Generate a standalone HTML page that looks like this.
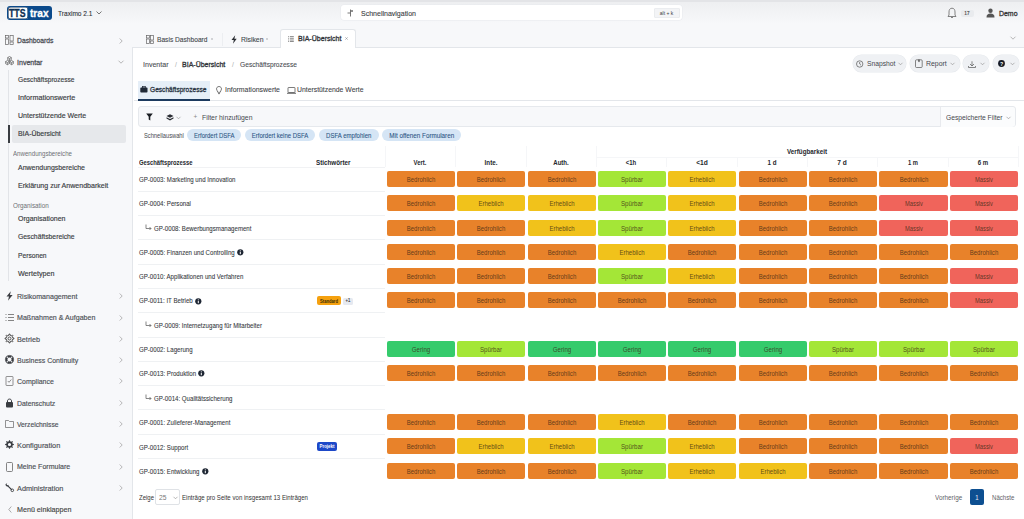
<!DOCTYPE html>
<html><head><meta charset="utf-8"><title>BIA-Übersicht</title>
<style>
html,body{margin:0;padding:0;width:1024px;height:519px;overflow:hidden;font-family:"Liberation Sans", sans-serif;}
.t{position:absolute;white-space:nowrap;line-height:12px;}
.info{display:inline-block;width:7.6px;height:6.5px;border-radius:50%;background:#1f2937;margin-left:4px;vertical-align:-0.5px;position:relative}
.info::after{content:"";position:absolute;left:3.3px;top:2.6px;width:1.1px;height:2.6px;background:#fff;box-shadow:0 -1.5px 0 -0.1px #fff}
svg{overflow:visible}
</style></head><body>
<div style="position:absolute;left:0;top:0;width:1024px;height:519px;background:#f7f8fa"></div>
<div style="position:absolute;left:0px;top:0px;width:1024px;height:24px;background:linear-gradient(#edeef0,#f7f8fa)"></div>
<div style="position:absolute;left:0px;top:0px;width:1024px;height:1.5px;background:#e3e4e7"></div>
<div style="position:absolute;left:7px;top:6px;width:45px;height:14px;border-radius:3px;background:#0b4a8b"></div>
<div style="position:absolute;left:8px;top:7px;width:20px;height:12px;border-radius:2.5px;background:#fff;box-shadow:inset 0 0 0 0.6px #163a60"></div>
<div class="t" style="left:9.4px;top:6.8px;font-size:10.4px;line-height:14px;font-weight:700;color:#0e2f52;-webkit-text-stroke:0.3px #0e2f52;transform:scaleX(0.84);transform-origin:0 50%">TTS</div>
<div class="t" style="left:29.8px;top:5.6px;font-size:11px;line-height:14px;font-weight:700;color:#fff;-webkit-text-stroke:0.3px #fff;transform:scaleX(0.92);transform-origin:0 50%">trax</div>
<div class="t" style="left:58px;top:8px;font-size:8px;color:#2d3035;font-weight:400;-webkit-text-stroke:0.1px #2d3035;transform:scaleX(0.8227);transform-origin:0 50%;">Traximo 2.1</div>
<svg style="position:absolute;left:96px;top:11px" width="6" height="4" viewBox="0 0 6 4"><path d="M0.5 0.5 L3 3 L5.5 0.5" fill="none" stroke="#555" stroke-width="0.8"/></svg>
<div style="position:absolute;left:341px;top:4.8px;width:341px;height:15.3px;background:#fff;border-radius:3px;box-shadow:0 0 0 0.5px #e8eaee"></div>
<svg style="position:absolute;left:347px;top:9px" width="7" height="8" viewBox="0 0 7 8"><path d="M3.5 0.5 V7.5 M0.5 4 H3.5 M3.5 2 H6 M5 1 V3" fill="none" stroke="#555" stroke-width="0.8"/></svg>
<div class="t" style="left:360.5px;top:7.6px;font-size:7.3px;color:#3a3d42;font-weight:400;-webkit-text-stroke:0.1px #3a3d42;transform:scaleX(0.9612);transform-origin:0 50%;">Schnellnavigation</div>
<div style="position:absolute;left:654px;top:8.3px;width:25.5px;height:9.5px;background:#f3f4f6;border-radius:2px;box-shadow:inset 0 0 0 0.6px #e4e6e9"></div>
<div class="t" style="left:654.3px;width:25px;text-align:center;top:7.199999999999999px;font-size:5.2px;color:#3a3d42;font-weight:400;transform:scaleX(0.9500);transform-origin:50% 50%;font-family:"Liberation Mono", monospace;">alt + k</div>
<svg style="position:absolute;left:947px;top:7px" width="10" height="12" viewBox="0 0 10 12"><path d="M5 1.2 C2.8 1.2 2 3 2 5 V8 L1 9.5 H9 L8 8 V5 C8 3 7.2 1.2 5 1.2 Z M4 10.5 H6" fill="none" stroke="#666" stroke-width="0.8"/></svg>
<div style="position:absolute;left:961px;top:9.5px;width:12.5px;height:7.5px;background:#e9ebee;border-radius:2px"></div>
<div class="t" style="left:960.2px;width:14px;text-align:center;top:7.300000000000001px;font-size:5.5px;color:#555;font-weight:700;transform:scaleX(0.8700);transform-origin:50% 50%;">17</div>
<svg style="position:absolute;left:986px;top:8px" width="9" height="10" viewBox="0 0 9 10"><circle cx="4.5" cy="2.8" r="2.2" fill="#555"/><path d="M0.5 9.5 C0.5 6.5 2 5.5 4.5 5.5 C7 5.5 8.5 6.5 8.5 9.5 Z" fill="#555"/></svg>
<div class="t" style="left:998.8px;top:8px;font-size:7.5px;color:#333;font-weight:400;-webkit-text-stroke:0.3px #333;transform:scaleX(0.9248);transform-origin:0 50%;">Demo</div>
<svg style="position:absolute;left:5px;top:35px" width="9" height="10" viewBox="0 0 9 10"><rect x="0.5" y="0.5" width="3" height="2.5" fill="none" stroke="#666" stroke-width="0.7"/><rect x="0.5" y="4" width="3" height="5.5" fill="none" stroke="#666" stroke-width="0.7"/><rect x="5" y="0.5" width="3.2" height="5.5" fill="none" stroke="#666" stroke-width="0.7"/><rect x="5" y="7" width="3.2" height="2.5" fill="none" stroke="#666" stroke-width="0.7"/></svg>
<div class="t" style="left:17.3px;top:35.099999999999994px;font-size:7.4px;color:#50535a;font-weight:400;-webkit-text-stroke:0.3px #50535a;transform:scaleX(0.9148);transform-origin:0 50%;">Dashboards</div>
<svg style="position:absolute;left:119px;top:37.5px" width="4" height="6" viewBox="0 0 4 6"><path d="M0.7 0.5 L3.2 3 L0.7 5.5" fill="none" stroke="#999" stroke-width="0.7"/></svg>
<svg style="position:absolute;left:4.8px;top:55.8px" width="9" height="10" viewBox="0 0 9 10"><path d="M4.50 0.50 L6.32 1.55 L6.32 3.65 L4.50 4.70 L2.68 3.65 L2.68 1.55 Z M2.68 1.55 L4.50 2.60 L6.32 1.55 M4.50 2.60 L4.50 4.70" fill="none" stroke="#555" stroke-width="0.65"/><path d="M2.40 4.50 L4.22 5.55 L4.22 7.65 L2.40 8.70 L0.58 7.65 L0.58 5.55 Z M0.58 5.55 L2.40 6.60 L4.22 5.55 M2.40 6.60 L2.40 8.70" fill="none" stroke="#555" stroke-width="0.65"/><path d="M6.60 4.50 L8.42 5.55 L8.42 7.65 L6.60 8.70 L4.78 7.65 L4.78 5.55 Z M4.78 5.55 L6.60 6.60 L8.42 5.55 M6.60 6.60 L6.60 8.70" fill="none" stroke="#555" stroke-width="0.65"/></svg>
<div class="t" style="left:17.3px;top:56.5px;font-size:7.4px;color:#50535a;font-weight:400;-webkit-text-stroke:0.3px #50535a;transform:scaleX(0.9538);transform-origin:0 50%;">Inventar</div>
<svg style="position:absolute;left:118px;top:60px" width="6" height="4" viewBox="0 0 6 4"><path d="M0.5 0.7 L3 3.2 L5.5 0.7" fill="none" stroke="#999" stroke-width="0.7"/></svg>
<div style="position:absolute;left:8px;top:70px;width:1px;height:211px;background:#e2e4e8"></div>
<div style="position:absolute;left:12px;top:125.1px;width:114px;height:18.3px;background:#e6e8eb;border-radius:2px"></div>
<div style="position:absolute;left:8px;top:125.1px;width:1.6px;height:18.3px;background:#3a3d42"></div>
<div class="t" style="left:17.8px;top:74.1px;font-size:7.4px;color:#3a3d42;font-weight:400;-webkit-text-stroke:0.16px #3a3d42;transform:scaleX(0.8936);transform-origin:0 50%;">Geschäftsprozesse</div>
<div class="t" style="left:17.8px;top:92.0px;font-size:7.4px;color:#3a3d42;font-weight:400;-webkit-text-stroke:0.16px #3a3d42;transform:scaleX(0.9743);transform-origin:0 50%;">Informationswerte</div>
<div class="t" style="left:17.8px;top:110.0px;font-size:7.4px;color:#3a3d42;font-weight:400;-webkit-text-stroke:0.16px #3a3d42;transform:scaleX(0.9494);transform-origin:0 50%;">Unterstützende Werte</div>
<div class="t" style="left:17.8px;top:128.10000000000002px;font-size:7.4px;color:#3a3d42;font-weight:400;-webkit-text-stroke:0.16px #3a3d42;transform:scaleX(0.9377);transform-origin:0 50%;">BIA-Übersicht</div>
<div class="t" style="left:13px;top:148.3px;font-size:6.8px;color:#6e7176;font-weight:400;transform:scaleX(0.9022);transform-origin:0 50%;">Anwendungsbereiche</div>
<div class="t" style="left:13px;top:199.60000000000002px;font-size:6.8px;color:#6e7176;font-weight:400;transform:scaleX(0.9260);transform-origin:0 50%;">Organisation</div>
<div class="t" style="left:17.5px;top:162.0px;font-size:7.4px;color:#3a3d42;font-weight:400;-webkit-text-stroke:0.16px #3a3d42;transform:scaleX(0.9414);transform-origin:0 50%;">Anwendungsbereiche</div>
<div class="t" style="left:17.5px;top:180.10000000000002px;font-size:7.4px;color:#3a3d42;font-weight:400;-webkit-text-stroke:0.16px #3a3d42;transform:scaleX(0.9556);transform-origin:0 50%;">Erklärung zur Anwendbarkeit</div>
<div class="t" style="left:17.5px;top:213.3px;font-size:7.4px;color:#3a3d42;font-weight:400;-webkit-text-stroke:0.16px #3a3d42;transform:scaleX(0.9465);transform-origin:0 50%;">Organisationen</div>
<div class="t" style="left:17.5px;top:231.3px;font-size:7.4px;color:#3a3d42;font-weight:400;-webkit-text-stroke:0.16px #3a3d42;transform:scaleX(0.9190);transform-origin:0 50%;">Geschäftsbereiche</div>
<div class="t" style="left:17.5px;top:249.8px;font-size:7.4px;color:#3a3d42;font-weight:400;-webkit-text-stroke:0.16px #3a3d42;transform:scaleX(0.9029);transform-origin:0 50%;">Personen</div>
<div class="t" style="left:17.5px;top:268.3px;font-size:7.4px;color:#3a3d42;font-weight:400;-webkit-text-stroke:0.16px #3a3d42;transform:scaleX(0.9681);transform-origin:0 50%;">Wertetypen</div>
<svg style="position:absolute;left:4.5px;top:291.4px" width="9" height="10" viewBox="0 0 9 10"><path d="M5.8 0.3 L1.5 5.6 H4 L3 9.7 L7.6 4 H5 Z" fill="#3a3d42"/></svg>
<div class="t" style="left:17.3px;top:291.2px;font-size:7.4px;color:#4d5056;font-weight:400;-webkit-text-stroke:0.16px #4d5056;transform:scaleX(0.9552);transform-origin:0 50%;">Risikomanagement</div>
<svg style="position:absolute;left:119.3px;top:293.4px" width="4" height="6" viewBox="0 0 4 6"><path d="M0.7 0.5 L3.2 3 L0.7 5.5" fill="none" stroke="#999" stroke-width="0.7"/></svg>
<svg style="position:absolute;left:4.5px;top:312.5px" width="9" height="10" viewBox="0 0 9 10"><path d="M0.5 1.5 H1.5 M0.5 4.5 H1.5 M0.5 7.5 H1.5 M3 1.5 H9 M3 4.5 H9 M3 7.5 H9" stroke="#666" stroke-width="0.8"/></svg>
<div class="t" style="left:17.3px;top:312.3px;font-size:7.4px;color:#4d5056;font-weight:400;-webkit-text-stroke:0.16px #4d5056;transform:scaleX(0.9590);transform-origin:0 50%;">Maßnahmen &amp; Aufgaben</div>
<svg style="position:absolute;left:119.3px;top:314.5px" width="4" height="6" viewBox="0 0 4 6"><path d="M0.7 0.5 L3.2 3 L0.7 5.5" fill="none" stroke="#999" stroke-width="0.7"/></svg>
<svg style="position:absolute;left:4.5px;top:334px" width="9" height="10" viewBox="0 0 9 10"><path d="M7.74 3.86 L8.87 3.98 L8.87 5.02 L7.74 5.14 L7.24 6.33 L7.96 7.22 L7.22 7.96 L6.33 7.24 L5.14 7.74 L5.02 8.87 L3.98 8.87 L3.86 7.74 L2.67 7.24 L1.78 7.96 L1.04 7.22 L1.76 6.33 L1.26 5.14 L0.13 5.02 L0.13 3.98 L1.26 3.86 L1.76 2.67 L1.04 1.78 L1.78 1.04 L2.67 1.76 L3.86 1.26 L3.98 0.13 L5.02 0.13 L5.14 1.26 L6.33 1.76 L7.22 1.04 L7.96 1.78 L7.24 2.67 Z" fill="none" stroke="#444" stroke-width="0.95" stroke-linejoin="round"/><circle cx="4.5" cy="4.5" r="1.5" fill="none" stroke="#444" stroke-width="0.9"/></svg>
<div class="t" style="left:17.3px;top:333.8px;font-size:7.4px;color:#4d5056;font-weight:400;-webkit-text-stroke:0.16px #4d5056;transform:scaleX(0.9810);transform-origin:0 50%;">Betrieb</div>
<svg style="position:absolute;left:119.3px;top:336px" width="4" height="6" viewBox="0 0 4 6"><path d="M0.7 0.5 L3.2 3 L0.7 5.5" fill="none" stroke="#999" stroke-width="0.7"/></svg>
<svg style="position:absolute;left:4.5px;top:355.3px" width="9" height="10" viewBox="0 0 9 10"><circle cx="4.5" cy="4.5" r="3.2" fill="none" stroke="#3a3d42" stroke-width="1.8"/><path d="M1.7 1.7 L3.4 3.4 M7.3 1.7 L5.6 3.4 M1.7 7.3 L3.4 5.6 M7.3 7.3 L5.6 5.6" stroke="#f7f8fa" stroke-width="1.2"/><circle cx="4.5" cy="4.5" r="4.1" fill="none" stroke="#3a3d42" stroke-width="0.6"/><circle cx="4.5" cy="4.5" r="2.3" fill="none" stroke="#3a3d42" stroke-width="0.5"/></svg>
<div class="t" style="left:17.3px;top:355.1px;font-size:7.4px;color:#4d5056;font-weight:400;-webkit-text-stroke:0.16px #4d5056;transform:scaleX(0.9417);transform-origin:0 50%;">Business Continuity</div>
<svg style="position:absolute;left:119.3px;top:357.3px" width="4" height="6" viewBox="0 0 4 6"><path d="M0.7 0.5 L3.2 3 L0.7 5.5" fill="none" stroke="#999" stroke-width="0.7"/></svg>
<svg style="position:absolute;left:4.5px;top:376.4px" width="9" height="10" viewBox="0 0 9 10"><rect x="1" y="0.5" width="7" height="9" rx="0.5" fill="none" stroke="#666" stroke-width="0.7"/><path d="M2.8 5 L4 6.3 L6.3 3.5" fill="none" stroke="#666" stroke-width="0.7"/></svg>
<div class="t" style="left:17.3px;top:376.2px;font-size:7.4px;color:#4d5056;font-weight:400;-webkit-text-stroke:0.16px #4d5056;transform:scaleX(0.9444);transform-origin:0 50%;">Compliance</div>
<svg style="position:absolute;left:119.3px;top:378.4px" width="4" height="6" viewBox="0 0 4 6"><path d="M0.7 0.5 L3.2 3 L0.7 5.5" fill="none" stroke="#999" stroke-width="0.7"/></svg>
<svg style="position:absolute;left:4.5px;top:398px" width="9" height="10" viewBox="0 0 9 10"><rect x="1" y="4" width="7" height="5.5" rx="1" fill="#3a3d42"/><path d="M2.5 4 V2.8 C2.5 0.5 6.5 0.5 6.5 2.8 V4" fill="none" stroke="#3a3d42" stroke-width="1"/></svg>
<div class="t" style="left:17.3px;top:397.8px;font-size:7.4px;color:#4d5056;font-weight:400;-webkit-text-stroke:0.16px #4d5056;transform:scaleX(0.9312);transform-origin:0 50%;">Datenschutz</div>
<svg style="position:absolute;left:119.3px;top:400px" width="4" height="6" viewBox="0 0 4 6"><path d="M0.7 0.5 L3.2 3 L0.7 5.5" fill="none" stroke="#999" stroke-width="0.7"/></svg>
<svg style="position:absolute;left:4.5px;top:419px" width="9" height="10" viewBox="0 0 9 10"><path d="M0.5 1.5 H3.5 L4.5 2.5 H8.5 V8.5 H0.5 Z" fill="none" stroke="#666" stroke-width="0.7"/></svg>
<div class="t" style="left:17.3px;top:418.8px;font-size:7.4px;color:#4d5056;font-weight:400;-webkit-text-stroke:0.16px #4d5056;transform:scaleX(0.9112);transform-origin:0 50%;">Verzeichnisse</div>
<svg style="position:absolute;left:119.3px;top:421px" width="4" height="6" viewBox="0 0 4 6"><path d="M0.7 0.5 L3.2 3 L0.7 5.5" fill="none" stroke="#999" stroke-width="0.7"/></svg>
<svg style="position:absolute;left:4.5px;top:440.2px" width="9" height="10" viewBox="0 0 9 10"><path d="M7.74 3.86 L8.87 3.98 L8.87 5.02 L7.74 5.14 L7.24 6.33 L7.96 7.22 L7.22 7.96 L6.33 7.24 L5.14 7.74 L5.02 8.87 L3.98 8.87 L3.86 7.74 L2.67 7.24 L1.78 7.96 L1.04 7.22 L1.76 6.33 L1.26 5.14 L0.13 5.02 L0.13 3.98 L1.26 3.86 L1.76 2.67 L1.04 1.78 L1.78 1.04 L2.67 1.76 L3.86 1.26 L3.98 0.13 L5.02 0.13 L5.14 1.26 L6.33 1.76 L7.22 1.04 L7.96 1.78 L7.24 2.67 Z M6.1 4.5 A1.6 1.6 0 1 0 2.9 4.5 A1.6 1.6 0 1 0 6.1 4.5 Z" fill="#3a3d42" fill-rule="evenodd"/></svg>
<div class="t" style="left:17.3px;top:440.0px;font-size:7.4px;color:#4d5056;font-weight:400;-webkit-text-stroke:0.16px #4d5056;transform:scaleX(0.9930);transform-origin:0 50%;">Konfiguration</div>
<svg style="position:absolute;left:119.3px;top:442.2px" width="4" height="6" viewBox="0 0 4 6"><path d="M0.7 0.5 L3.2 3 L0.7 5.5" fill="none" stroke="#999" stroke-width="0.7"/></svg>
<svg style="position:absolute;left:4.5px;top:461.6px" width="9" height="10" viewBox="0 0 9 10"><rect x="1.5" y="0.5" width="6" height="9" rx="1" fill="none" stroke="#666" stroke-width="0.8"/></svg>
<div class="t" style="left:17.3px;top:461.40000000000003px;font-size:7.4px;color:#4d5056;font-weight:400;-webkit-text-stroke:0.16px #4d5056;transform:scaleX(0.9513);transform-origin:0 50%;">Meine Formulare</div>
<svg style="position:absolute;left:119.3px;top:463.6px" width="4" height="6" viewBox="0 0 4 6"><path d="M0.7 0.5 L3.2 3 L0.7 5.5" fill="none" stroke="#999" stroke-width="0.7"/></svg>
<svg style="position:absolute;left:4.5px;top:482.8px" width="9" height="10" viewBox="0 0 9 10"><path d="M2.3 2.3 L6.8 6.8" stroke="#3a3d42" stroke-width="1.2" fill="none"/><path d="M0.6 2.2 C0.2 1.2 1.2 0.2 2.2 0.6 L1.6 1.6 L2.4 2.4 L3.4 1.8 C3.8 2.8 2.8 3.8 1.8 3.4 Z" fill="#3a3d42"/><circle cx="7.3" cy="7.3" r="1.3" fill="none" stroke="#3a3d42" stroke-width="0.9"/></svg>
<div class="t" style="left:17.3px;top:482.6px;font-size:7.4px;color:#4d5056;font-weight:400;-webkit-text-stroke:0.16px #4d5056;transform:scaleX(0.9918);transform-origin:0 50%;">Administration</div>
<svg style="position:absolute;left:119.3px;top:484.8px" width="4" height="6" viewBox="0 0 4 6"><path d="M0.7 0.5 L3.2 3 L0.7 5.5" fill="none" stroke="#999" stroke-width="0.7"/></svg>
<svg style="position:absolute;left:8px;top:505.5px" width="4" height="7" viewBox="0 0 4 7"><path d="M3.3 0.5 L0.8 3.5 L3.3 6.5" fill="none" stroke="#888" stroke-width="0.7"/></svg>
<div class="t" style="left:17.4px;top:503.8px;font-size:7.4px;color:#444;font-weight:400;-webkit-text-stroke:0.15px #444;transform:scaleX(0.9670);transform-origin:0 50%;">Menü einklappen</div>
<svg style="position:absolute;left:146px;top:34.5px" width="8" height="9" viewBox="0 0 8 9"><rect x="0.5" y="0.5" width="3" height="2.5" fill="none" stroke="#666" stroke-width="0.7"/><rect x="0.5" y="4" width="3" height="4.5" fill="none" stroke="#666" stroke-width="0.7"/><rect x="4.5" y="0.5" width="3" height="4.5" fill="none" stroke="#666" stroke-width="0.7"/><rect x="4.5" y="6" width="3" height="2.5" fill="none" stroke="#666" stroke-width="0.7"/></svg>
<div class="t" style="left:156.6px;top:33.6px;font-size:7.8px;color:#45484e;font-weight:400;-webkit-text-stroke:0.12px #45484e;transform:scaleX(0.8502);transform-origin:0 50%;">Basis Dashboard</div>
<svg style="position:absolute;left:210.8px;top:38px" width="2" height="2" viewBox="0 0 2 2"><path d="M0.2 0.2 L1.8 1.8 M1.8 0.2 L0.2 1.8" stroke="#a8aaae" stroke-width="0.6"/></svg>
<div style="position:absolute;left:222px;top:33px;width:0.7px;height:13px;background:#eceef1"></div>
<svg style="position:absolute;left:230.8px;top:35.2px" width="6" height="9" viewBox="0 0 6 9"><path d="M4.2 0.3 L0.5 5 H2.8 L2 8.7 L5.7 3.8 H3.4 Z" fill="#2a2d32"/></svg>
<div class="t" style="left:240.8px;top:33.6px;font-size:7.8px;color:#45484e;font-weight:400;-webkit-text-stroke:0.12px #45484e;transform:scaleX(0.8798);transform-origin:0 50%;">Risiken</div>
<svg style="position:absolute;left:266.2px;top:38px" width="2" height="2" viewBox="0 0 2 2"><path d="M0.2 0.2 L1.8 1.8 M1.8 0.2 L0.2 1.8" stroke="#a8aaae" stroke-width="0.6"/></svg>
<div style="position:absolute;left:131.7px;top:47px;width:892.3px;height:473px;background:#fff;border-top:1px solid #e3e6ea;border-left:1px solid #e3e6ea;box-sizing:border-box"></div>
<div style="position:absolute;left:279.5px;top:28.8px;width:76.5px;height:19.4px;background:#fff;border:1px solid #e3e6ea;border-bottom:none;border-radius:3px 3px 0 0;box-sizing:border-box"></div>
<svg style="position:absolute;left:288px;top:35.5px" width="6" height="6" viewBox="0 0 6 6"><path d="M0.2 0.6 H1.2 M0.2 2.3 H1.2 M0.2 4 H1.2 M0.2 5.5 H1.2 M2 0.6 H5.8 M2 2.3 H5.8 M2 4 H5.8 M2 5.5 H5.8" stroke="#666" stroke-width="0.75"/></svg>
<div class="t" style="left:297.6px;top:33.4px;font-size:7.8px;color:#2e3136;font-weight:400;-webkit-text-stroke:0.3px #2e3136;transform:scaleX(0.9041);transform-origin:0 50%;">BIA-Übersicht</div>
<svg style="position:absolute;left:345.2px;top:37.2px" width="3" height="3" viewBox="0 0 3 3"><path d="M0.3 0.3 L2.7 2.7 M2.7 0.3 L0.3 2.7" stroke="#8a8d92" stroke-width="0.6"/></svg>
<svg style="position:absolute;left:1010px;top:36px" width="6" height="4" viewBox="0 0 6 4"><path d="M0.5 0.7 L3 3.2 L5.5 0.7" fill="none" stroke="#999" stroke-width="0.7"/></svg>
<div class="t" style="left:142.7px;top:59px;font-size:7.6px;color:#4a4d52;font-weight:400;-webkit-text-stroke:0.1px #4a4d52;transform:scaleX(0.9287);transform-origin:0 50%;">Inventar</div>
<div class="t" style="left:172.0px;width:8px;text-align:center;top:59px;font-size:7.6px;color:#aaa;font-weight:400;transform:scaleX(0.8700);transform-origin:50% 50%;">/</div>
<div class="t" style="left:182.4px;top:59px;font-size:7.6px;color:#2e3136;font-weight:400;-webkit-text-stroke:0.3px #2e3136;transform:scaleX(0.9237);transform-origin:0 50%;">BIA-Übersicht</div>
<div class="t" style="left:229.0px;width:8px;text-align:center;top:59px;font-size:7.6px;color:#aaa;font-weight:400;transform:scaleX(0.8700);transform-origin:50% 50%;">/</div>
<div class="t" style="left:239.5px;top:59px;font-size:7.6px;color:#4a4d52;font-weight:400;-webkit-text-stroke:0.1px #4a4d52;transform:scaleX(0.8763);transform-origin:0 50%;">Geschäftsprozesse</div>
<div style="position:absolute;left:852.5px;top:55.2px;width:53.5px;height:16.5px;background:#eff1f4;border-radius:8.25px;box-shadow:0 0 0 0.5px #e6e9ed"></div>
<div style="position:absolute;left:909.8px;top:55.2px;width:49.8px;height:16.5px;background:#eff1f4;border-radius:8.25px;box-shadow:0 0 0 0.5px #e6e9ed"></div>
<div style="position:absolute;left:963px;top:55.2px;width:26.3px;height:16.5px;background:#eff1f4;border-radius:8.25px;box-shadow:0 0 0 0.5px #e6e9ed"></div>
<div style="position:absolute;left:992.7px;top:55.2px;width:26.3px;height:16.5px;background:#eff1f4;border-radius:8.25px;box-shadow:0 0 0 0.5px #e6e9ed"></div>
<svg style="position:absolute;left:856px;top:60px" width="7.5" height="8" viewBox="0 0 7.5 8"><circle cx="3.7" cy="4" r="3.2" fill="none" stroke="#555" stroke-width="0.7"/><path d="M3.7 2 V4 L5 5.2" fill="none" stroke="#555" stroke-width="0.7"/></svg>
<div class="t" style="left:866.5px;top:57.9px;font-size:7.8px;color:#45484e;font-weight:400;transform:scaleX(0.8648);transform-origin:0 50%;">Snapshot</div>
<svg style="position:absolute;left:898px;top:61.5px" width="5" height="4" viewBox="0 0 5 4"><path d="M0.5 0.8 L2.5 2.8 L4.5 0.8" fill="none" stroke="#888" stroke-width="0.6"/></svg>
<svg style="position:absolute;left:915px;top:59.3px" width="8" height="9" viewBox="0 0 8 9"><rect x="0.5" y="0.8" width="6.7" height="7.7" rx="1" fill="none" stroke="#555" stroke-width="0.7"/><path d="M3.2 0.5 H4.7 V3.2 L3.95 2.6 L3.2 3.2 Z" fill="#555"/></svg>
<div class="t" style="left:925.6px;top:57.9px;font-size:7.8px;color:#45484e;font-weight:400;transform:scaleX(0.8885);transform-origin:0 50%;">Report</div>
<svg style="position:absolute;left:950px;top:61.5px" width="5" height="4" viewBox="0 0 5 4"><path d="M0.5 0.8 L2.5 2.8 L4.5 0.8" fill="none" stroke="#888" stroke-width="0.6"/></svg>
<svg style="position:absolute;left:968px;top:60.5px" width="8" height="7" viewBox="0 0 8 7"><path d="M4 0.3 V4.8 M2 3 L4 5 L6 3 M0.5 5 V6.5 H7.5 V5" fill="none" stroke="#555" stroke-width="0.7"/></svg>
<svg style="position:absolute;left:980px;top:61.5px" width="5" height="4" viewBox="0 0 5 4"><path d="M0.5 0.8 L2.5 2.8 L4.5 0.8" fill="none" stroke="#888" stroke-width="0.6"/></svg>
<svg style="position:absolute;left:998.3px;top:59.8px" width="7" height="7" viewBox="0 0 7 7"><circle cx="3.5" cy="3.5" r="3.4" fill="#151a24"/><text x="3.5" y="5.5" font-size="5.2" font-family="Liberation Sans" font-weight="700" fill="#fff" text-anchor="middle">?</text></svg>
<svg style="position:absolute;left:1009.5px;top:61.5px" width="5" height="4" viewBox="0 0 5 4"><path d="M0.5 0.8 L2.5 2.8 L4.5 0.8" fill="none" stroke="#888" stroke-width="0.6"/></svg>
<div style="position:absolute;left:133.5px;top:99.7px;width:890.5px;height:0.8px;background:#e3e6ea"></div>
<div style="position:absolute;left:138.3px;top:81px;width:71.7px;height:18.5px;background:#e6eff8"></div>
<div style="position:absolute;left:138.3px;top:98.5px;width:71.7px;height:2.2px;background:#1c3a5e"></div>
<svg style="position:absolute;left:140px;top:86px" width="8" height="7" viewBox="0 0 8 7"><rect x="0.3" y="1.6" width="7.2" height="5" rx="0.8" fill="#1f2937"/><rect x="2.4" y="0.4" width="3" height="1.6" fill="none" stroke="#1f2937" stroke-width="0.7"/></svg>
<div class="t" style="left:150.2px;top:84.3px;font-size:7.6px;color:#283342;font-weight:400;-webkit-text-stroke:0.3px #283342;transform:scaleX(0.8686);transform-origin:0 50%;">Geschäftsprozesse</div>
<svg style="position:absolute;left:216px;top:85.5px" width="6" height="9" viewBox="0 0 6 9"><path d="M3 0.5 C1.3 0.5 0.5 1.8 0.5 3 C0.5 4.5 1.8 5 1.8 6.3 H4.2 C4.2 5 5.5 4.5 5.5 3 C5.5 1.8 4.7 0.5 3 0.5 Z M2 7.6 H4" fill="none" stroke="#444" stroke-width="0.7"/></svg>
<div class="t" style="left:224.7px;top:84.3px;font-size:7.6px;color:#3e4146;font-weight:400;-webkit-text-stroke:0.08px #3e4146;transform:scaleX(0.9106);transform-origin:0 50%;">Informationswerte</div>
<svg style="position:absolute;left:286.8px;top:86.5px" width="9" height="7" viewBox="0 0 9 7"><rect x="1" y="0.5" width="7" height="5" rx="0.5" fill="none" stroke="#444" stroke-width="0.7"/><path d="M0 6.3 H9" stroke="#444" stroke-width="0.8"/></svg>
<div class="t" style="left:296.7px;top:84.3px;font-size:7.6px;color:#3e4146;font-weight:400;-webkit-text-stroke:0.08px #3e4146;transform:scaleX(0.9013);transform-origin:0 50%;">Unterstützende Werte</div>
<div style="position:absolute;left:137.5px;top:105.8px;width:878px;height:21.7px;background:#f7f8fa;border:0.7px solid #e6e9ed;border-radius:3px;box-sizing:border-box"></div>
<div style="position:absolute;left:939.8px;top:106.5px;width:0.7px;height:20.5px;background:#e8eaee"></div>
<div style="position:absolute;left:940.5px;top:106.5px;width:74.3px;height:20.3px;background:#fbfcfd;border-radius:0 3px 3px 0"></div>
<svg style="position:absolute;left:145.5px;top:113.3px" width="7" height="8" viewBox="0 0 7 8"><path d="M0.2 0.5 H6.8 L4.3 3.8 V7.6 L2.7 6.6 V3.8 Z" fill="#1a1d22"/></svg>
<svg style="position:absolute;left:165.5px;top:113.8px" width="8" height="7" viewBox="0 0 8 7"><path d="M4 0.3 L7.5 2 L4 3.7 L0.5 2 Z" fill="#2a2d33"/><path d="M0.5 3.3 L4 5 L7.5 3.3 V4.5 L4 6.5 L0.5 4.5 Z" fill="#2a2d33"/></svg>
<svg style="position:absolute;left:175.5px;top:115.8px" width="5" height="4" viewBox="0 0 5 4"><path d="M0.5 0.8 L2.5 2.8 L4.5 0.8" fill="none" stroke="#888" stroke-width="0.6"/></svg>
<div class="t" style="left:191.5px;width:8px;text-align:center;top:111px;font-size:6.5px;color:#888;font-weight:400;transform:scaleX(1.0000);transform-origin:50% 50%;">+</div>
<div class="t" style="left:202px;top:112px;font-size:7.6px;color:#45484e;font-weight:400;transform:scaleX(0.8988);transform-origin:0 50%;">Filter hinzufügen</div>
<div class="t" style="left:946px;top:111.9px;font-size:7.6px;color:#45484e;font-weight:400;transform:scaleX(0.8801);transform-origin:0 50%;">Gespeicherte Filter</div>
<svg style="position:absolute;left:1006px;top:115.8px" width="5" height="4" viewBox="0 0 5 4"><path d="M0.5 0.8 L2.5 2.8 L4.5 0.8" fill="none" stroke="#888" stroke-width="0.6"/></svg>
<div class="t" style="left:143.7px;top:130px;font-size:6.8px;color:#45484e;font-weight:400;transform:scaleX(0.8423);transform-origin:0 50%;">Schnellauswahl</div>
<div style="position:absolute;left:186.6px;top:129.1px;width:54.70000000000002px;height:11.8px;background:#d5e5f5;border-radius:6px"></div>
<div class="t" style="left:181.59999999999997px;width:64.70000000000002px;text-align:center;top:130.2px;font-size:6.8px;color:#2b5584;font-weight:400;-webkit-text-stroke:0.08px #2b5584;transform:scaleX(0.8785);transform-origin:50% 50%;">Erfordert DSFA</div>
<div style="position:absolute;left:244.8px;top:129.1px;width:70.19999999999999px;height:11.8px;background:#d5e5f5;border-radius:6px"></div>
<div class="t" style="left:239.79999999999998px;width:80.19999999999999px;text-align:center;top:130.2px;font-size:6.8px;color:#2b5584;font-weight:400;-webkit-text-stroke:0.08px #2b5584;transform:scaleX(0.8794);transform-origin:50% 50%;">Erfordert keine DSFA</div>
<div style="position:absolute;left:319px;top:129.1px;width:59.5px;height:11.8px;background:#d5e5f5;border-radius:6px"></div>
<div class="t" style="left:314.0px;width:69.5px;text-align:center;top:130.2px;font-size:6.8px;color:#2b5584;font-weight:400;-webkit-text-stroke:0.08px #2b5584;transform:scaleX(0.8878);transform-origin:50% 50%;">DSFA empfohlen</div>
<div style="position:absolute;left:381.5px;top:129.1px;width:79.5px;height:11.8px;background:#d5e5f5;border-radius:6px"></div>
<div class="t" style="left:376.5px;width:89.5px;text-align:center;top:130.2px;font-size:6.8px;color:#2b5584;font-weight:400;-webkit-text-stroke:0.08px #2b5584;transform:scaleX(0.9249);transform-origin:50% 50%;">Mit offenen Formularen</div>
<div style="position:absolute;left:385.0px;top:146px;width:0.6px;height:21px;background:#f5f6f8"></div>
<div style="position:absolute;left:455.35px;top:146px;width:0.6px;height:21px;background:#f5f6f8"></div>
<div style="position:absolute;left:525.7px;top:146px;width:0.6px;height:21px;background:#f5f6f8"></div>
<div style="position:absolute;left:596.05px;top:146px;width:0.6px;height:21px;background:#f5f6f8"></div>
<div style="position:absolute;left:666.4px;top:157px;width:0.6px;height:10px;background:#f5f6f8"></div>
<div style="position:absolute;left:736.75px;top:157px;width:0.6px;height:10px;background:#f5f6f8"></div>
<div style="position:absolute;left:807.0999999999999px;top:157px;width:0.6px;height:10px;background:#f5f6f8"></div>
<div style="position:absolute;left:877.4499999999999px;top:157px;width:0.6px;height:10px;background:#f5f6f8"></div>
<div style="position:absolute;left:947.8px;top:157px;width:0.6px;height:10px;background:#f5f6f8"></div>
<div style="position:absolute;left:1018.15px;top:146px;width:0.6px;height:21px;background:#f5f6f8"></div>
<div style="position:absolute;left:596.05px;top:156.8px;width:422.09999999999997px;height:0.6px;background:#f5f6f8"></div>
<div style="position:absolute;left:137.5px;top:166.8px;width:247.5px;height:0.7px;background:#f1f2f4"></div>
<div class="t" style="left:139.4px;top:156.5px;font-size:7.3px;color:#25282d;font-weight:700;transform:scaleX(0.7992);transform-origin:0 50%;">Geschäftsprozesse</div>
<div class="t" style="left:316px;top:156.8px;font-size:7.3px;color:#25282d;font-weight:700;transform:scaleX(0.8592);transform-origin:0 50%;">Stichwörter</div>
<div class="t" style="left:390.175px;width:60px;text-align:center;top:156.8px;font-size:7.3px;color:#25282d;font-weight:700;transform:scaleX(0.8088);transform-origin:50% 50%;">Vert.</div>
<div class="t" style="left:460.52500000000003px;width:60px;text-align:center;top:156.8px;font-size:7.3px;color:#25282d;font-weight:700;transform:scaleX(0.8531);transform-origin:50% 50%;">Inte.</div>
<div class="t" style="left:530.875px;width:60px;text-align:center;top:156.8px;font-size:7.3px;color:#25282d;font-weight:700;transform:scaleX(0.8312);transform-origin:50% 50%;">Auth.</div>
<div class="t" style="left:601.2249999999999px;width:60px;text-align:center;top:156.8px;font-size:7.3px;color:#25282d;font-weight:700;transform:scaleX(0.8215);transform-origin:50% 50%;">&lt;1h</div>
<div class="t" style="left:671.5749999999999px;width:60px;text-align:center;top:156.8px;font-size:7.3px;color:#25282d;font-weight:700;transform:scaleX(0.9154);transform-origin:50% 50%;">&lt;1d</div>
<div class="t" style="left:741.925px;width:60px;text-align:center;top:156.8px;font-size:7.3px;color:#25282d;font-weight:700;transform:scaleX(0.8534);transform-origin:50% 50%;">1 d</div>
<div class="t" style="left:812.2749999999999px;width:60px;text-align:center;top:156.8px;font-size:7.3px;color:#25282d;font-weight:700;transform:scaleX(0.9008);transform-origin:50% 50%;">7 d</div>
<div class="t" style="left:882.6249999999999px;width:60px;text-align:center;top:156.8px;font-size:7.3px;color:#25282d;font-weight:700;transform:scaleX(0.7950);transform-origin:50% 50%;">1 m</div>
<div class="t" style="left:952.9749999999999px;width:60px;text-align:center;top:156.8px;font-size:7.3px;color:#25282d;font-weight:700;transform:scaleX(0.8347);transform-origin:50% 50%;">6 m</div>
<div class="t" style="left:757.0999999999999px;width:100px;text-align:center;top:145.7px;font-size:7.3px;color:#25282d;font-weight:700;transform:scaleX(0.8574);transform-origin:50% 50%;">Verfügbarkeit</div>
<div style="position:absolute;left:137.5px;top:190.9px;width:247.5px;height:0.8px;background:#eff1f3"></div>
<div class="t" style="left:139.3px;top:174.0px;font-size:7.2px;color:#35383d;font-weight:400;-webkit-text-stroke:0.08px #35383d;transform:scaleX(0.8500);transform-origin:0 50%;">GP-0003: Marketing und Innovation</div>
<div style="position:absolute;left:387.0px;top:171.0px;width:68.1px;height:16.1px;background:#e8822a;border-radius:2px"></div>
<div class="t" style="left:387.05px;width:68px;text-align:center;top:174.0px;font-size:7px;color:rgba(60,42,22,0.82);font-weight:400;transform:scaleX(0.8617);transform-origin:50% 50%;">Bedrohlich</div>
<div style="position:absolute;left:457.35px;top:171.0px;width:68.1px;height:16.1px;background:#e8822a;border-radius:2px"></div>
<div class="t" style="left:457.40000000000003px;width:68px;text-align:center;top:174.0px;font-size:7px;color:rgba(60,42,22,0.82);font-weight:400;transform:scaleX(0.8617);transform-origin:50% 50%;">Bedrohlich</div>
<div style="position:absolute;left:527.7px;top:171.0px;width:68.1px;height:16.1px;background:#e8822a;border-radius:2px"></div>
<div class="t" style="left:527.75px;width:68px;text-align:center;top:174.0px;font-size:7px;color:rgba(60,42,22,0.82);font-weight:400;transform:scaleX(0.8617);transform-origin:50% 50%;">Bedrohlich</div>
<div style="position:absolute;left:598.05px;top:171.0px;width:68.1px;height:16.1px;background:#a4e637;border-radius:2px"></div>
<div class="t" style="left:598.0999999999999px;width:68px;text-align:center;top:174.0px;font-size:7px;color:rgba(60,42,22,0.82);font-weight:400;transform:scaleX(0.8835);transform-origin:50% 50%;">Spürbar</div>
<div style="position:absolute;left:668.4px;top:171.0px;width:68.1px;height:16.1px;background:#f1c21b;border-radius:2px"></div>
<div class="t" style="left:668.4499999999999px;width:68px;text-align:center;top:174.0px;font-size:7px;color:rgba(60,42,22,0.82);font-weight:400;transform:scaleX(0.8636);transform-origin:50% 50%;">Erheblich</div>
<div style="position:absolute;left:738.75px;top:171.0px;width:68.1px;height:16.1px;background:#e8822a;border-radius:2px"></div>
<div class="t" style="left:738.8px;width:68px;text-align:center;top:174.0px;font-size:7px;color:rgba(60,42,22,0.82);font-weight:400;transform:scaleX(0.8617);transform-origin:50% 50%;">Bedrohlich</div>
<div style="position:absolute;left:809.0999999999999px;top:171.0px;width:68.1px;height:16.1px;background:#e8822a;border-radius:2px"></div>
<div class="t" style="left:809.1499999999999px;width:68px;text-align:center;top:174.0px;font-size:7px;color:rgba(60,42,22,0.82);font-weight:400;transform:scaleX(0.8617);transform-origin:50% 50%;">Bedrohlich</div>
<div style="position:absolute;left:879.4499999999999px;top:171.0px;width:68.1px;height:16.1px;background:#e8822a;border-radius:2px"></div>
<div class="t" style="left:879.4999999999999px;width:68px;text-align:center;top:174.0px;font-size:7px;color:rgba(60,42,22,0.82);font-weight:400;transform:scaleX(0.8617);transform-origin:50% 50%;">Bedrohlich</div>
<div style="position:absolute;left:949.8px;top:171.0px;width:68.1px;height:16.1px;background:#f0645b;border-radius:2px"></div>
<div class="t" style="left:949.8499999999999px;width:68px;text-align:center;top:174.0px;font-size:7px;color:rgba(60,42,22,0.82);font-weight:400;transform:scaleX(0.8265);transform-origin:50% 50%;">Massiv</div>
<div style="position:absolute;left:137.5px;top:215.17000000000002px;width:247.5px;height:0.8px;background:#eff1f3"></div>
<div class="t" style="left:139.3px;top:198.27px;font-size:7.2px;color:#35383d;font-weight:400;-webkit-text-stroke:0.08px #35383d;transform:scaleX(0.8500);transform-origin:0 50%;">GP-0004: Personal</div>
<div style="position:absolute;left:387.0px;top:195.27px;width:68.1px;height:16.1px;background:#e8822a;border-radius:2px"></div>
<div class="t" style="left:387.05px;width:68px;text-align:center;top:198.27px;font-size:7px;color:rgba(60,42,22,0.82);font-weight:400;transform:scaleX(0.8617);transform-origin:50% 50%;">Bedrohlich</div>
<div style="position:absolute;left:457.35px;top:195.27px;width:68.1px;height:16.1px;background:#f1c21b;border-radius:2px"></div>
<div class="t" style="left:457.40000000000003px;width:68px;text-align:center;top:198.27px;font-size:7px;color:rgba(60,42,22,0.82);font-weight:400;transform:scaleX(0.8636);transform-origin:50% 50%;">Erheblich</div>
<div style="position:absolute;left:527.7px;top:195.27px;width:68.1px;height:16.1px;background:#f1c21b;border-radius:2px"></div>
<div class="t" style="left:527.75px;width:68px;text-align:center;top:198.27px;font-size:7px;color:rgba(60,42,22,0.82);font-weight:400;transform:scaleX(0.8636);transform-origin:50% 50%;">Erheblich</div>
<div style="position:absolute;left:598.05px;top:195.27px;width:68.1px;height:16.1px;background:#a4e637;border-radius:2px"></div>
<div class="t" style="left:598.0999999999999px;width:68px;text-align:center;top:198.27px;font-size:7px;color:rgba(60,42,22,0.82);font-weight:400;transform:scaleX(0.8835);transform-origin:50% 50%;">Spürbar</div>
<div style="position:absolute;left:668.4px;top:195.27px;width:68.1px;height:16.1px;background:#f1c21b;border-radius:2px"></div>
<div class="t" style="left:668.4499999999999px;width:68px;text-align:center;top:198.27px;font-size:7px;color:rgba(60,42,22,0.82);font-weight:400;transform:scaleX(0.8636);transform-origin:50% 50%;">Erheblich</div>
<div style="position:absolute;left:738.75px;top:195.27px;width:68.1px;height:16.1px;background:#e8822a;border-radius:2px"></div>
<div class="t" style="left:738.8px;width:68px;text-align:center;top:198.27px;font-size:7px;color:rgba(60,42,22,0.82);font-weight:400;transform:scaleX(0.8617);transform-origin:50% 50%;">Bedrohlich</div>
<div style="position:absolute;left:809.0999999999999px;top:195.27px;width:68.1px;height:16.1px;background:#e8822a;border-radius:2px"></div>
<div class="t" style="left:809.1499999999999px;width:68px;text-align:center;top:198.27px;font-size:7px;color:rgba(60,42,22,0.82);font-weight:400;transform:scaleX(0.8617);transform-origin:50% 50%;">Bedrohlich</div>
<div style="position:absolute;left:879.4499999999999px;top:195.27px;width:68.1px;height:16.1px;background:#f0645b;border-radius:2px"></div>
<div class="t" style="left:879.4999999999999px;width:68px;text-align:center;top:198.27px;font-size:7px;color:rgba(60,42,22,0.82);font-weight:400;transform:scaleX(0.8265);transform-origin:50% 50%;">Massiv</div>
<div style="position:absolute;left:949.8px;top:195.27px;width:68.1px;height:16.1px;background:#f0645b;border-radius:2px"></div>
<div class="t" style="left:949.8499999999999px;width:68px;text-align:center;top:198.27px;font-size:7px;color:rgba(60,42,22,0.82);font-weight:400;transform:scaleX(0.8265);transform-origin:50% 50%;">Massiv</div>
<div style="position:absolute;left:137.5px;top:239.44px;width:247.5px;height:0.8px;background:#eff1f3"></div>
<svg style="position:absolute;left:145px;top:224.04px" width="7" height="7" viewBox="0 0 7 7"><path d="M1 0.5 V4.5 H6 M4.5 3 L6 4.5 L4.5 6" fill="none" stroke="#555" stroke-width="0.7"/></svg>
<div class="t" style="left:153.5px;top:222.54px;font-size:7.2px;color:#35383d;font-weight:400;-webkit-text-stroke:0.08px #35383d;transform:scaleX(0.8500);transform-origin:0 50%;">GP-0008: Bewerbungsmanagement</div>
<div style="position:absolute;left:387.0px;top:219.54px;width:68.1px;height:16.1px;background:#e8822a;border-radius:2px"></div>
<div class="t" style="left:387.05px;width:68px;text-align:center;top:222.54px;font-size:7px;color:rgba(60,42,22,0.82);font-weight:400;transform:scaleX(0.8617);transform-origin:50% 50%;">Bedrohlich</div>
<div style="position:absolute;left:457.35px;top:219.54px;width:68.1px;height:16.1px;background:#e8822a;border-radius:2px"></div>
<div class="t" style="left:457.40000000000003px;width:68px;text-align:center;top:222.54px;font-size:7px;color:rgba(60,42,22,0.82);font-weight:400;transform:scaleX(0.8617);transform-origin:50% 50%;">Bedrohlich</div>
<div style="position:absolute;left:527.7px;top:219.54px;width:68.1px;height:16.1px;background:#f1c21b;border-radius:2px"></div>
<div class="t" style="left:527.75px;width:68px;text-align:center;top:222.54px;font-size:7px;color:rgba(60,42,22,0.82);font-weight:400;transform:scaleX(0.8636);transform-origin:50% 50%;">Erheblich</div>
<div style="position:absolute;left:598.05px;top:219.54px;width:68.1px;height:16.1px;background:#a4e637;border-radius:2px"></div>
<div class="t" style="left:598.0999999999999px;width:68px;text-align:center;top:222.54px;font-size:7px;color:rgba(60,42,22,0.82);font-weight:400;transform:scaleX(0.8835);transform-origin:50% 50%;">Spürbar</div>
<div style="position:absolute;left:668.4px;top:219.54px;width:68.1px;height:16.1px;background:#f1c21b;border-radius:2px"></div>
<div class="t" style="left:668.4499999999999px;width:68px;text-align:center;top:222.54px;font-size:7px;color:rgba(60,42,22,0.82);font-weight:400;transform:scaleX(0.8636);transform-origin:50% 50%;">Erheblich</div>
<div style="position:absolute;left:738.75px;top:219.54px;width:68.1px;height:16.1px;background:#e8822a;border-radius:2px"></div>
<div class="t" style="left:738.8px;width:68px;text-align:center;top:222.54px;font-size:7px;color:rgba(60,42,22,0.82);font-weight:400;transform:scaleX(0.8617);transform-origin:50% 50%;">Bedrohlich</div>
<div style="position:absolute;left:809.0999999999999px;top:219.54px;width:68.1px;height:16.1px;background:#e8822a;border-radius:2px"></div>
<div class="t" style="left:809.1499999999999px;width:68px;text-align:center;top:222.54px;font-size:7px;color:rgba(60,42,22,0.82);font-weight:400;transform:scaleX(0.8617);transform-origin:50% 50%;">Bedrohlich</div>
<div style="position:absolute;left:879.4499999999999px;top:219.54px;width:68.1px;height:16.1px;background:#f0645b;border-radius:2px"></div>
<div class="t" style="left:879.4999999999999px;width:68px;text-align:center;top:222.54px;font-size:7px;color:rgba(60,42,22,0.82);font-weight:400;transform:scaleX(0.8265);transform-origin:50% 50%;">Massiv</div>
<div style="position:absolute;left:949.8px;top:219.54px;width:68.1px;height:16.1px;background:#f0645b;border-radius:2px"></div>
<div class="t" style="left:949.8499999999999px;width:68px;text-align:center;top:222.54px;font-size:7px;color:rgba(60,42,22,0.82);font-weight:400;transform:scaleX(0.8265);transform-origin:50% 50%;">Massiv</div>
<div style="position:absolute;left:137.5px;top:263.71px;width:247.5px;height:0.8px;background:#eff1f3"></div>
<div class="t" style="left:139.3px;top:246.81px;font-size:7.2px;color:#35383d;font-weight:400;-webkit-text-stroke:0.08px #35383d;transform:scaleX(0.8500);transform-origin:0 50%;">GP-0005: Finanzen und Controlling</div>
<svg style="position:absolute;left:237.23195625000002px;top:249.11px" width="6.6" height="6.6" viewBox="0 0 6.6 6.6"><circle cx="3.3" cy="3.3" r="3.1" fill="#1e2633"/><rect x="2.8" y="2.8" width="1" height="2.4" fill="#fff"/><circle cx="3.3" cy="1.8" r="0.55" fill="#fff"/></svg>
<div style="position:absolute;left:387.0px;top:243.81px;width:68.1px;height:16.1px;background:#e8822a;border-radius:2px"></div>
<div class="t" style="left:387.05px;width:68px;text-align:center;top:246.81px;font-size:7px;color:rgba(60,42,22,0.82);font-weight:400;transform:scaleX(0.8617);transform-origin:50% 50%;">Bedrohlich</div>
<div style="position:absolute;left:457.35px;top:243.81px;width:68.1px;height:16.1px;background:#e8822a;border-radius:2px"></div>
<div class="t" style="left:457.40000000000003px;width:68px;text-align:center;top:246.81px;font-size:7px;color:rgba(60,42,22,0.82);font-weight:400;transform:scaleX(0.8617);transform-origin:50% 50%;">Bedrohlich</div>
<div style="position:absolute;left:527.7px;top:243.81px;width:68.1px;height:16.1px;background:#e8822a;border-radius:2px"></div>
<div class="t" style="left:527.75px;width:68px;text-align:center;top:246.81px;font-size:7px;color:rgba(60,42,22,0.82);font-weight:400;transform:scaleX(0.8617);transform-origin:50% 50%;">Bedrohlich</div>
<div style="position:absolute;left:598.05px;top:243.81px;width:68.1px;height:16.1px;background:#f1c21b;border-radius:2px"></div>
<div class="t" style="left:598.0999999999999px;width:68px;text-align:center;top:246.81px;font-size:7px;color:rgba(60,42,22,0.82);font-weight:400;transform:scaleX(0.8636);transform-origin:50% 50%;">Erheblich</div>
<div style="position:absolute;left:668.4px;top:243.81px;width:68.1px;height:16.1px;background:#e8822a;border-radius:2px"></div>
<div class="t" style="left:668.4499999999999px;width:68px;text-align:center;top:246.81px;font-size:7px;color:rgba(60,42,22,0.82);font-weight:400;transform:scaleX(0.8617);transform-origin:50% 50%;">Bedrohlich</div>
<div style="position:absolute;left:738.75px;top:243.81px;width:68.1px;height:16.1px;background:#e8822a;border-radius:2px"></div>
<div class="t" style="left:738.8px;width:68px;text-align:center;top:246.81px;font-size:7px;color:rgba(60,42,22,0.82);font-weight:400;transform:scaleX(0.8617);transform-origin:50% 50%;">Bedrohlich</div>
<div style="position:absolute;left:809.0999999999999px;top:243.81px;width:68.1px;height:16.1px;background:#e8822a;border-radius:2px"></div>
<div class="t" style="left:809.1499999999999px;width:68px;text-align:center;top:246.81px;font-size:7px;color:rgba(60,42,22,0.82);font-weight:400;transform:scaleX(0.8617);transform-origin:50% 50%;">Bedrohlich</div>
<div style="position:absolute;left:879.4499999999999px;top:243.81px;width:68.1px;height:16.1px;background:#e8822a;border-radius:2px"></div>
<div class="t" style="left:879.4999999999999px;width:68px;text-align:center;top:246.81px;font-size:7px;color:rgba(60,42,22,0.82);font-weight:400;transform:scaleX(0.8617);transform-origin:50% 50%;">Bedrohlich</div>
<div style="position:absolute;left:949.8px;top:243.81px;width:68.1px;height:16.1px;background:#e8822a;border-radius:2px"></div>
<div class="t" style="left:949.8499999999999px;width:68px;text-align:center;top:246.81px;font-size:7px;color:rgba(60,42,22,0.82);font-weight:400;transform:scaleX(0.8617);transform-origin:50% 50%;">Bedrohlich</div>
<div style="position:absolute;left:137.5px;top:287.97999999999996px;width:247.5px;height:0.8px;background:#eff1f3"></div>
<div class="t" style="left:139.3px;top:271.08px;font-size:7.2px;color:#35383d;font-weight:400;-webkit-text-stroke:0.08px #35383d;transform:scaleX(0.8500);transform-origin:0 50%;">GP-0010: Applikationen und Verfahren</div>
<div style="position:absolute;left:387.0px;top:268.08px;width:68.1px;height:16.1px;background:#e8822a;border-radius:2px"></div>
<div class="t" style="left:387.05px;width:68px;text-align:center;top:271.08px;font-size:7px;color:rgba(60,42,22,0.82);font-weight:400;transform:scaleX(0.8617);transform-origin:50% 50%;">Bedrohlich</div>
<div style="position:absolute;left:457.35px;top:268.08px;width:68.1px;height:16.1px;background:#e8822a;border-radius:2px"></div>
<div class="t" style="left:457.40000000000003px;width:68px;text-align:center;top:271.08px;font-size:7px;color:rgba(60,42,22,0.82);font-weight:400;transform:scaleX(0.8617);transform-origin:50% 50%;">Bedrohlich</div>
<div style="position:absolute;left:527.7px;top:268.08px;width:68.1px;height:16.1px;background:#e8822a;border-radius:2px"></div>
<div class="t" style="left:527.75px;width:68px;text-align:center;top:271.08px;font-size:7px;color:rgba(60,42,22,0.82);font-weight:400;transform:scaleX(0.8617);transform-origin:50% 50%;">Bedrohlich</div>
<div style="position:absolute;left:598.05px;top:268.08px;width:68.1px;height:16.1px;background:#a4e637;border-radius:2px"></div>
<div class="t" style="left:598.0999999999999px;width:68px;text-align:center;top:271.08px;font-size:7px;color:rgba(60,42,22,0.82);font-weight:400;transform:scaleX(0.8835);transform-origin:50% 50%;">Spürbar</div>
<div style="position:absolute;left:668.4px;top:268.08px;width:68.1px;height:16.1px;background:#f1c21b;border-radius:2px"></div>
<div class="t" style="left:668.4499999999999px;width:68px;text-align:center;top:271.08px;font-size:7px;color:rgba(60,42,22,0.82);font-weight:400;transform:scaleX(0.8636);transform-origin:50% 50%;">Erheblich</div>
<div style="position:absolute;left:738.75px;top:268.08px;width:68.1px;height:16.1px;background:#e8822a;border-radius:2px"></div>
<div class="t" style="left:738.8px;width:68px;text-align:center;top:271.08px;font-size:7px;color:rgba(60,42,22,0.82);font-weight:400;transform:scaleX(0.8617);transform-origin:50% 50%;">Bedrohlich</div>
<div style="position:absolute;left:809.0999999999999px;top:268.08px;width:68.1px;height:16.1px;background:#e8822a;border-radius:2px"></div>
<div class="t" style="left:809.1499999999999px;width:68px;text-align:center;top:271.08px;font-size:7px;color:rgba(60,42,22,0.82);font-weight:400;transform:scaleX(0.8617);transform-origin:50% 50%;">Bedrohlich</div>
<div style="position:absolute;left:879.4499999999999px;top:268.08px;width:68.1px;height:16.1px;background:#e8822a;border-radius:2px"></div>
<div class="t" style="left:879.4999999999999px;width:68px;text-align:center;top:271.08px;font-size:7px;color:rgba(60,42,22,0.82);font-weight:400;transform:scaleX(0.8617);transform-origin:50% 50%;">Bedrohlich</div>
<div style="position:absolute;left:949.8px;top:268.08px;width:68.1px;height:16.1px;background:#f0645b;border-radius:2px"></div>
<div class="t" style="left:949.8499999999999px;width:68px;text-align:center;top:271.08px;font-size:7px;color:rgba(60,42,22,0.82);font-weight:400;transform:scaleX(0.8265);transform-origin:50% 50%;">Massiv</div>
<div style="position:absolute;left:137.5px;top:312.25px;width:247.5px;height:0.8px;background:#eff1f3"></div>
<div class="t" style="left:139.3px;top:295.35px;font-size:7.2px;color:#35383d;font-weight:400;-webkit-text-stroke:0.08px #35383d;transform:scaleX(0.8500);transform-origin:0 50%;">GP-0011: IT Betrieb</div>
<svg style="position:absolute;left:195.15695625px;top:297.65000000000003px" width="6.6" height="6.6" viewBox="0 0 6.6 6.6"><circle cx="3.3" cy="3.3" r="3.1" fill="#1e2633"/><rect x="2.8" y="2.8" width="1" height="2.4" fill="#fff"/><circle cx="3.3" cy="1.8" r="0.55" fill="#fff"/></svg>
<div style="position:absolute;left:317px;top:296.35px;width:24px;height:9px;background:#f5a10f;border-radius:2px"></div>
<div class="t" style="left:316.0px;width:26px;text-align:center;top:294.65000000000003px;font-size:5.2px;color:#3a2a05;font-weight:700;transform:scaleX(0.7987);transform-origin:50% 50%;">Standard</div>
<div style="position:absolute;left:343.4px;top:298.05px;width:10px;height:6.5px;background:#e6e9f0;border-radius:1.5px"></div>
<div class="t" style="left:343.4px;width:10px;text-align:center;top:295.15000000000003px;font-size:4.8px;color:#333;font-weight:400;-webkit-text-stroke:0.1px #333;transform:scaleX(0.8700);transform-origin:50% 50%;">+1</div>
<div style="position:absolute;left:387.0px;top:292.35px;width:68.1px;height:16.1px;background:#e8822a;border-radius:2px"></div>
<div class="t" style="left:387.05px;width:68px;text-align:center;top:295.35px;font-size:7px;color:rgba(60,42,22,0.82);font-weight:400;transform:scaleX(0.8617);transform-origin:50% 50%;">Bedrohlich</div>
<div style="position:absolute;left:457.35px;top:292.35px;width:68.1px;height:16.1px;background:#e8822a;border-radius:2px"></div>
<div class="t" style="left:457.40000000000003px;width:68px;text-align:center;top:295.35px;font-size:7px;color:rgba(60,42,22,0.82);font-weight:400;transform:scaleX(0.8617);transform-origin:50% 50%;">Bedrohlich</div>
<div style="position:absolute;left:527.7px;top:292.35px;width:68.1px;height:16.1px;background:#e8822a;border-radius:2px"></div>
<div class="t" style="left:527.75px;width:68px;text-align:center;top:295.35px;font-size:7px;color:rgba(60,42,22,0.82);font-weight:400;transform:scaleX(0.8617);transform-origin:50% 50%;">Bedrohlich</div>
<div style="position:absolute;left:598.05px;top:292.35px;width:68.1px;height:16.1px;background:#e8822a;border-radius:2px"></div>
<div class="t" style="left:598.0999999999999px;width:68px;text-align:center;top:295.35px;font-size:7px;color:rgba(60,42,22,0.82);font-weight:400;transform:scaleX(0.8617);transform-origin:50% 50%;">Bedrohlich</div>
<div style="position:absolute;left:668.4px;top:292.35px;width:68.1px;height:16.1px;background:#e8822a;border-radius:2px"></div>
<div class="t" style="left:668.4499999999999px;width:68px;text-align:center;top:295.35px;font-size:7px;color:rgba(60,42,22,0.82);font-weight:400;transform:scaleX(0.8617);transform-origin:50% 50%;">Bedrohlich</div>
<div style="position:absolute;left:738.75px;top:292.35px;width:68.1px;height:16.1px;background:#e8822a;border-radius:2px"></div>
<div class="t" style="left:738.8px;width:68px;text-align:center;top:295.35px;font-size:7px;color:rgba(60,42,22,0.82);font-weight:400;transform:scaleX(0.8617);transform-origin:50% 50%;">Bedrohlich</div>
<div style="position:absolute;left:809.0999999999999px;top:292.35px;width:68.1px;height:16.1px;background:#e8822a;border-radius:2px"></div>
<div class="t" style="left:809.1499999999999px;width:68px;text-align:center;top:295.35px;font-size:7px;color:rgba(60,42,22,0.82);font-weight:400;transform:scaleX(0.8617);transform-origin:50% 50%;">Bedrohlich</div>
<div style="position:absolute;left:879.4499999999999px;top:292.35px;width:68.1px;height:16.1px;background:#e8822a;border-radius:2px"></div>
<div class="t" style="left:879.4999999999999px;width:68px;text-align:center;top:295.35px;font-size:7px;color:rgba(60,42,22,0.82);font-weight:400;transform:scaleX(0.8617);transform-origin:50% 50%;">Bedrohlich</div>
<div style="position:absolute;left:949.8px;top:292.35px;width:68.1px;height:16.1px;background:#f0645b;border-radius:2px"></div>
<div class="t" style="left:949.8499999999999px;width:68px;text-align:center;top:295.35px;font-size:7px;color:rgba(60,42,22,0.82);font-weight:400;transform:scaleX(0.8265);transform-origin:50% 50%;">Massiv</div>
<div style="position:absolute;left:137.5px;top:336.52px;width:247.5px;height:0.8px;background:#eff1f3"></div>
<svg style="position:absolute;left:145px;top:321.12px" width="7" height="7" viewBox="0 0 7 7"><path d="M1 0.5 V4.5 H6 M4.5 3 L6 4.5 L4.5 6" fill="none" stroke="#555" stroke-width="0.7"/></svg>
<div class="t" style="left:153.5px;top:319.62px;font-size:7.2px;color:#35383d;font-weight:400;-webkit-text-stroke:0.08px #35383d;transform:scaleX(0.8500);transform-origin:0 50%;">GP-0009: Internetzugang für Mitarbeiter</div>
<div style="position:absolute;left:137.5px;top:360.78999999999996px;width:247.5px;height:0.8px;background:#eff1f3"></div>
<div class="t" style="left:139.3px;top:343.89px;font-size:7.2px;color:#35383d;font-weight:400;-webkit-text-stroke:0.08px #35383d;transform:scaleX(0.8500);transform-origin:0 50%;">GP-0002: Lagerung</div>
<div style="position:absolute;left:387.0px;top:340.89px;width:68.1px;height:16.1px;background:#35cb6c;border-radius:2px"></div>
<div class="t" style="left:387.05px;width:68px;text-align:center;top:343.89px;font-size:7px;color:rgba(60,42,22,0.82);font-weight:400;transform:scaleX(0.8806);transform-origin:50% 50%;">Gering</div>
<div style="position:absolute;left:457.35px;top:340.89px;width:68.1px;height:16.1px;background:#a4e637;border-radius:2px"></div>
<div class="t" style="left:457.40000000000003px;width:68px;text-align:center;top:343.89px;font-size:7px;color:rgba(60,42,22,0.82);font-weight:400;transform:scaleX(0.8835);transform-origin:50% 50%;">Spürbar</div>
<div style="position:absolute;left:527.7px;top:340.89px;width:68.1px;height:16.1px;background:#35cb6c;border-radius:2px"></div>
<div class="t" style="left:527.75px;width:68px;text-align:center;top:343.89px;font-size:7px;color:rgba(60,42,22,0.82);font-weight:400;transform:scaleX(0.8806);transform-origin:50% 50%;">Gering</div>
<div style="position:absolute;left:598.05px;top:340.89px;width:68.1px;height:16.1px;background:#35cb6c;border-radius:2px"></div>
<div class="t" style="left:598.0999999999999px;width:68px;text-align:center;top:343.89px;font-size:7px;color:rgba(60,42,22,0.82);font-weight:400;transform:scaleX(0.8806);transform-origin:50% 50%;">Gering</div>
<div style="position:absolute;left:668.4px;top:340.89px;width:68.1px;height:16.1px;background:#35cb6c;border-radius:2px"></div>
<div class="t" style="left:668.4499999999999px;width:68px;text-align:center;top:343.89px;font-size:7px;color:rgba(60,42,22,0.82);font-weight:400;transform:scaleX(0.8806);transform-origin:50% 50%;">Gering</div>
<div style="position:absolute;left:738.75px;top:340.89px;width:68.1px;height:16.1px;background:#35cb6c;border-radius:2px"></div>
<div class="t" style="left:738.8px;width:68px;text-align:center;top:343.89px;font-size:7px;color:rgba(60,42,22,0.82);font-weight:400;transform:scaleX(0.8806);transform-origin:50% 50%;">Gering</div>
<div style="position:absolute;left:809.0999999999999px;top:340.89px;width:68.1px;height:16.1px;background:#a4e637;border-radius:2px"></div>
<div class="t" style="left:809.1499999999999px;width:68px;text-align:center;top:343.89px;font-size:7px;color:rgba(60,42,22,0.82);font-weight:400;transform:scaleX(0.8835);transform-origin:50% 50%;">Spürbar</div>
<div style="position:absolute;left:879.4499999999999px;top:340.89px;width:68.1px;height:16.1px;background:#a4e637;border-radius:2px"></div>
<div class="t" style="left:879.4999999999999px;width:68px;text-align:center;top:343.89px;font-size:7px;color:rgba(60,42,22,0.82);font-weight:400;transform:scaleX(0.8835);transform-origin:50% 50%;">Spürbar</div>
<div style="position:absolute;left:949.8px;top:340.89px;width:68.1px;height:16.1px;background:#a4e637;border-radius:2px"></div>
<div class="t" style="left:949.8499999999999px;width:68px;text-align:center;top:343.89px;font-size:7px;color:rgba(60,42,22,0.82);font-weight:400;transform:scaleX(0.8835);transform-origin:50% 50%;">Spürbar</div>
<div style="position:absolute;left:137.5px;top:385.05999999999995px;width:247.5px;height:0.8px;background:#eff1f3"></div>
<div class="t" style="left:139.3px;top:368.15999999999997px;font-size:7.2px;color:#35383d;font-weight:400;-webkit-text-stroke:0.08px #35383d;transform:scaleX(0.8500);transform-origin:0 50%;">GP-0013: Produktion</div>
<svg style="position:absolute;left:198.45028125000002px;top:370.46px" width="6.6" height="6.6" viewBox="0 0 6.6 6.6"><circle cx="3.3" cy="3.3" r="3.1" fill="#1e2633"/><rect x="2.8" y="2.8" width="1" height="2.4" fill="#fff"/><circle cx="3.3" cy="1.8" r="0.55" fill="#fff"/></svg>
<div style="position:absolute;left:387.0px;top:365.15999999999997px;width:68.1px;height:16.1px;background:#e8822a;border-radius:2px"></div>
<div class="t" style="left:387.05px;width:68px;text-align:center;top:368.15999999999997px;font-size:7px;color:rgba(60,42,22,0.82);font-weight:400;transform:scaleX(0.8617);transform-origin:50% 50%;">Bedrohlich</div>
<div style="position:absolute;left:457.35px;top:365.15999999999997px;width:68.1px;height:16.1px;background:#e8822a;border-radius:2px"></div>
<div class="t" style="left:457.40000000000003px;width:68px;text-align:center;top:368.15999999999997px;font-size:7px;color:rgba(60,42,22,0.82);font-weight:400;transform:scaleX(0.8617);transform-origin:50% 50%;">Bedrohlich</div>
<div style="position:absolute;left:527.7px;top:365.15999999999997px;width:68.1px;height:16.1px;background:#e8822a;border-radius:2px"></div>
<div class="t" style="left:527.75px;width:68px;text-align:center;top:368.15999999999997px;font-size:7px;color:rgba(60,42,22,0.82);font-weight:400;transform:scaleX(0.8617);transform-origin:50% 50%;">Bedrohlich</div>
<div style="position:absolute;left:598.05px;top:365.15999999999997px;width:68.1px;height:16.1px;background:#e8822a;border-radius:2px"></div>
<div class="t" style="left:598.0999999999999px;width:68px;text-align:center;top:368.15999999999997px;font-size:7px;color:rgba(60,42,22,0.82);font-weight:400;transform:scaleX(0.8617);transform-origin:50% 50%;">Bedrohlich</div>
<div style="position:absolute;left:668.4px;top:365.15999999999997px;width:68.1px;height:16.1px;background:#e8822a;border-radius:2px"></div>
<div class="t" style="left:668.4499999999999px;width:68px;text-align:center;top:368.15999999999997px;font-size:7px;color:rgba(60,42,22,0.82);font-weight:400;transform:scaleX(0.8617);transform-origin:50% 50%;">Bedrohlich</div>
<div style="position:absolute;left:738.75px;top:365.15999999999997px;width:68.1px;height:16.1px;background:#e8822a;border-radius:2px"></div>
<div class="t" style="left:738.8px;width:68px;text-align:center;top:368.15999999999997px;font-size:7px;color:rgba(60,42,22,0.82);font-weight:400;transform:scaleX(0.8617);transform-origin:50% 50%;">Bedrohlich</div>
<div style="position:absolute;left:809.0999999999999px;top:365.15999999999997px;width:68.1px;height:16.1px;background:#e8822a;border-radius:2px"></div>
<div class="t" style="left:809.1499999999999px;width:68px;text-align:center;top:368.15999999999997px;font-size:7px;color:rgba(60,42,22,0.82);font-weight:400;transform:scaleX(0.8617);transform-origin:50% 50%;">Bedrohlich</div>
<div style="position:absolute;left:879.4499999999999px;top:365.15999999999997px;width:68.1px;height:16.1px;background:#e8822a;border-radius:2px"></div>
<div class="t" style="left:879.4999999999999px;width:68px;text-align:center;top:368.15999999999997px;font-size:7px;color:rgba(60,42,22,0.82);font-weight:400;transform:scaleX(0.8617);transform-origin:50% 50%;">Bedrohlich</div>
<div style="position:absolute;left:949.8px;top:365.15999999999997px;width:68.1px;height:16.1px;background:#e8822a;border-radius:2px"></div>
<div class="t" style="left:949.8499999999999px;width:68px;text-align:center;top:368.15999999999997px;font-size:7px;color:rgba(60,42,22,0.82);font-weight:400;transform:scaleX(0.8617);transform-origin:50% 50%;">Bedrohlich</div>
<div style="position:absolute;left:137.5px;top:409.45px;width:247.5px;height:0.8px;background:#eff1f3"></div>
<svg style="position:absolute;left:145px;top:394.13px" width="7" height="7" viewBox="0 0 7 7"><path d="M1 0.5 V4.5 H6 M4.5 3 L6 4.5 L4.5 6" fill="none" stroke="#555" stroke-width="0.7"/></svg>
<div class="t" style="left:153.5px;top:392.63px;font-size:7.2px;color:#35383d;font-weight:400;-webkit-text-stroke:0.08px #35383d;transform:scaleX(0.8500);transform-origin:0 50%;">GP-0014: Qualitätssicherung</div>
<div style="position:absolute;left:137.5px;top:433.84px;width:247.5px;height:0.8px;background:#eff1f3"></div>
<div class="t" style="left:139.3px;top:417.09999999999997px;font-size:7.2px;color:#35383d;font-weight:400;-webkit-text-stroke:0.08px #35383d;transform:scaleX(0.8500);transform-origin:0 50%;">GP-0001: Zulieferer-Management</div>
<div style="position:absolute;left:387.0px;top:413.94px;width:68.1px;height:16.1px;background:#e8822a;border-radius:2px"></div>
<div class="t" style="left:387.05px;width:68px;text-align:center;top:416.94px;font-size:7px;color:rgba(60,42,22,0.82);font-weight:400;transform:scaleX(0.8617);transform-origin:50% 50%;">Bedrohlich</div>
<div style="position:absolute;left:457.35px;top:413.94px;width:68.1px;height:16.1px;background:#e8822a;border-radius:2px"></div>
<div class="t" style="left:457.40000000000003px;width:68px;text-align:center;top:416.94px;font-size:7px;color:rgba(60,42,22,0.82);font-weight:400;transform:scaleX(0.8617);transform-origin:50% 50%;">Bedrohlich</div>
<div style="position:absolute;left:527.7px;top:413.94px;width:68.1px;height:16.1px;background:#e8822a;border-radius:2px"></div>
<div class="t" style="left:527.75px;width:68px;text-align:center;top:416.94px;font-size:7px;color:rgba(60,42,22,0.82);font-weight:400;transform:scaleX(0.8617);transform-origin:50% 50%;">Bedrohlich</div>
<div style="position:absolute;left:598.05px;top:413.94px;width:68.1px;height:16.1px;background:#f1c21b;border-radius:2px"></div>
<div class="t" style="left:598.0999999999999px;width:68px;text-align:center;top:416.94px;font-size:7px;color:rgba(60,42,22,0.82);font-weight:400;transform:scaleX(0.8636);transform-origin:50% 50%;">Erheblich</div>
<div style="position:absolute;left:668.4px;top:413.94px;width:68.1px;height:16.1px;background:#e8822a;border-radius:2px"></div>
<div class="t" style="left:668.4499999999999px;width:68px;text-align:center;top:416.94px;font-size:7px;color:rgba(60,42,22,0.82);font-weight:400;transform:scaleX(0.8617);transform-origin:50% 50%;">Bedrohlich</div>
<div style="position:absolute;left:738.75px;top:413.94px;width:68.1px;height:16.1px;background:#e8822a;border-radius:2px"></div>
<div class="t" style="left:738.8px;width:68px;text-align:center;top:416.94px;font-size:7px;color:rgba(60,42,22,0.82);font-weight:400;transform:scaleX(0.8617);transform-origin:50% 50%;">Bedrohlich</div>
<div style="position:absolute;left:809.0999999999999px;top:413.94px;width:68.1px;height:16.1px;background:#e8822a;border-radius:2px"></div>
<div class="t" style="left:809.1499999999999px;width:68px;text-align:center;top:416.94px;font-size:7px;color:rgba(60,42,22,0.82);font-weight:400;transform:scaleX(0.8617);transform-origin:50% 50%;">Bedrohlich</div>
<div style="position:absolute;left:879.4499999999999px;top:413.94px;width:68.1px;height:16.1px;background:#e8822a;border-radius:2px"></div>
<div class="t" style="left:879.4999999999999px;width:68px;text-align:center;top:416.94px;font-size:7px;color:rgba(60,42,22,0.82);font-weight:400;transform:scaleX(0.8617);transform-origin:50% 50%;">Bedrohlich</div>
<div style="position:absolute;left:949.8px;top:413.94px;width:68.1px;height:16.1px;background:#e8822a;border-radius:2px"></div>
<div class="t" style="left:949.8499999999999px;width:68px;text-align:center;top:416.94px;font-size:7px;color:rgba(60,42,22,0.82);font-weight:400;transform:scaleX(0.8617);transform-origin:50% 50%;">Bedrohlich</div>
<div style="position:absolute;left:137.5px;top:458.22999999999996px;width:247.5px;height:0.8px;background:#eff1f3"></div>
<div class="t" style="left:139.3px;top:441.57px;font-size:7.2px;color:#35383d;font-weight:400;-webkit-text-stroke:0.08px #35383d;transform:scaleX(0.8500);transform-origin:0 50%;">GP-0012: Support</div>
<div style="position:absolute;left:317px;top:442.07px;width:20px;height:8.8px;background:#1d48c8;border-radius:2px"></div>
<div class="t" style="left:316.0px;width:22px;text-align:center;top:440.46999999999997px;font-size:5.2px;color:#fff;font-weight:700;transform:scaleX(0.8509);transform-origin:50% 50%;">Projekt</div>
<div style="position:absolute;left:387.0px;top:438.33px;width:68.1px;height:16.1px;background:#e8822a;border-radius:2px"></div>
<div class="t" style="left:387.05px;width:68px;text-align:center;top:441.33px;font-size:7px;color:rgba(60,42,22,0.82);font-weight:400;transform:scaleX(0.8617);transform-origin:50% 50%;">Bedrohlich</div>
<div style="position:absolute;left:457.35px;top:438.33px;width:68.1px;height:16.1px;background:#f1c21b;border-radius:2px"></div>
<div class="t" style="left:457.40000000000003px;width:68px;text-align:center;top:441.33px;font-size:7px;color:rgba(60,42,22,0.82);font-weight:400;transform:scaleX(0.8636);transform-origin:50% 50%;">Erheblich</div>
<div style="position:absolute;left:527.7px;top:438.33px;width:68.1px;height:16.1px;background:#f1c21b;border-radius:2px"></div>
<div class="t" style="left:527.75px;width:68px;text-align:center;top:441.33px;font-size:7px;color:rgba(60,42,22,0.82);font-weight:400;transform:scaleX(0.8636);transform-origin:50% 50%;">Erheblich</div>
<div style="position:absolute;left:598.05px;top:438.33px;width:68.1px;height:16.1px;background:#a4e637;border-radius:2px"></div>
<div class="t" style="left:598.0999999999999px;width:68px;text-align:center;top:441.33px;font-size:7px;color:rgba(60,42,22,0.82);font-weight:400;transform:scaleX(0.8835);transform-origin:50% 50%;">Spürbar</div>
<div style="position:absolute;left:668.4px;top:438.33px;width:68.1px;height:16.1px;background:#f1c21b;border-radius:2px"></div>
<div class="t" style="left:668.4499999999999px;width:68px;text-align:center;top:441.33px;font-size:7px;color:rgba(60,42,22,0.82);font-weight:400;transform:scaleX(0.8636);transform-origin:50% 50%;">Erheblich</div>
<div style="position:absolute;left:738.75px;top:438.33px;width:68.1px;height:16.1px;background:#e8822a;border-radius:2px"></div>
<div class="t" style="left:738.8px;width:68px;text-align:center;top:441.33px;font-size:7px;color:rgba(60,42,22,0.82);font-weight:400;transform:scaleX(0.8617);transform-origin:50% 50%;">Bedrohlich</div>
<div style="position:absolute;left:809.0999999999999px;top:438.33px;width:68.1px;height:16.1px;background:#e8822a;border-radius:2px"></div>
<div class="t" style="left:809.1499999999999px;width:68px;text-align:center;top:441.33px;font-size:7px;color:rgba(60,42,22,0.82);font-weight:400;transform:scaleX(0.8617);transform-origin:50% 50%;">Bedrohlich</div>
<div style="position:absolute;left:879.4499999999999px;top:438.33px;width:68.1px;height:16.1px;background:#e8822a;border-radius:2px"></div>
<div class="t" style="left:879.4999999999999px;width:68px;text-align:center;top:441.33px;font-size:7px;color:rgba(60,42,22,0.82);font-weight:400;transform:scaleX(0.8617);transform-origin:50% 50%;">Bedrohlich</div>
<div style="position:absolute;left:949.8px;top:438.33px;width:68.1px;height:16.1px;background:#f0645b;border-radius:2px"></div>
<div class="t" style="left:949.8499999999999px;width:68px;text-align:center;top:441.33px;font-size:7px;color:rgba(60,42,22,0.82);font-weight:400;transform:scaleX(0.8265);transform-origin:50% 50%;">Massiv</div>
<div class="t" style="left:139.3px;top:466.04px;font-size:7.2px;color:#35383d;font-weight:400;-webkit-text-stroke:0.08px #35383d;transform:scaleX(0.8500);transform-origin:0 50%;">GP-0015: Entwicklung</div>
<svg style="position:absolute;left:201.84879375px;top:468.34000000000003px" width="6.6" height="6.6" viewBox="0 0 6.6 6.6"><circle cx="3.3" cy="3.3" r="3.1" fill="#1e2633"/><rect x="2.8" y="2.8" width="1" height="2.4" fill="#fff"/><circle cx="3.3" cy="1.8" r="0.55" fill="#fff"/></svg>
<div style="position:absolute;left:387.0px;top:462.72px;width:68.1px;height:16.1px;background:#e8822a;border-radius:2px"></div>
<div class="t" style="left:387.05px;width:68px;text-align:center;top:465.72px;font-size:7px;color:rgba(60,42,22,0.82);font-weight:400;transform:scaleX(0.8617);transform-origin:50% 50%;">Bedrohlich</div>
<div style="position:absolute;left:457.35px;top:462.72px;width:68.1px;height:16.1px;background:#e8822a;border-radius:2px"></div>
<div class="t" style="left:457.40000000000003px;width:68px;text-align:center;top:465.72px;font-size:7px;color:rgba(60,42,22,0.82);font-weight:400;transform:scaleX(0.8617);transform-origin:50% 50%;">Bedrohlich</div>
<div style="position:absolute;left:527.7px;top:462.72px;width:68.1px;height:16.1px;background:#e8822a;border-radius:2px"></div>
<div class="t" style="left:527.75px;width:68px;text-align:center;top:465.72px;font-size:7px;color:rgba(60,42,22,0.82);font-weight:400;transform:scaleX(0.8617);transform-origin:50% 50%;">Bedrohlich</div>
<div style="position:absolute;left:598.05px;top:462.72px;width:68.1px;height:16.1px;background:#a4e637;border-radius:2px"></div>
<div class="t" style="left:598.0999999999999px;width:68px;text-align:center;top:465.72px;font-size:7px;color:rgba(60,42,22,0.82);font-weight:400;transform:scaleX(0.8835);transform-origin:50% 50%;">Spürbar</div>
<div style="position:absolute;left:668.4px;top:462.72px;width:68.1px;height:16.1px;background:#f1c21b;border-radius:2px"></div>
<div class="t" style="left:668.4499999999999px;width:68px;text-align:center;top:465.72px;font-size:7px;color:rgba(60,42,22,0.82);font-weight:400;transform:scaleX(0.8636);transform-origin:50% 50%;">Erheblich</div>
<div style="position:absolute;left:738.75px;top:462.72px;width:68.1px;height:16.1px;background:#f1c21b;border-radius:2px"></div>
<div class="t" style="left:738.8px;width:68px;text-align:center;top:465.72px;font-size:7px;color:rgba(60,42,22,0.82);font-weight:400;transform:scaleX(0.8636);transform-origin:50% 50%;">Erheblich</div>
<div style="position:absolute;left:809.0999999999999px;top:462.72px;width:68.1px;height:16.1px;background:#e8822a;border-radius:2px"></div>
<div class="t" style="left:809.1499999999999px;width:68px;text-align:center;top:465.72px;font-size:7px;color:rgba(60,42,22,0.82);font-weight:400;transform:scaleX(0.8617);transform-origin:50% 50%;">Bedrohlich</div>
<div style="position:absolute;left:879.4499999999999px;top:462.72px;width:68.1px;height:16.1px;background:#e8822a;border-radius:2px"></div>
<div class="t" style="left:879.4999999999999px;width:68px;text-align:center;top:465.72px;font-size:7px;color:rgba(60,42,22,0.82);font-weight:400;transform:scaleX(0.8617);transform-origin:50% 50%;">Bedrohlich</div>
<div style="position:absolute;left:949.8px;top:462.72px;width:68.1px;height:16.1px;background:#e8822a;border-radius:2px"></div>
<div class="t" style="left:949.8499999999999px;width:68px;text-align:center;top:465.72px;font-size:7px;color:rgba(60,42,22,0.82);font-weight:400;transform:scaleX(0.8617);transform-origin:50% 50%;">Bedrohlich</div>
<div class="t" style="left:138.5px;top:491.8px;font-size:7.3px;color:#333;font-weight:400;transform:scaleX(0.8215);transform-origin:0 50%;">Zeige</div>
<div style="position:absolute;left:155.3px;top:488.6px;width:25.2px;height:16.3px;background:#fff;border:0.7px solid #dfe2e6;border-radius:2px;box-sizing:border-box"></div>
<div class="t" style="left:159px;top:491.6px;font-size:7.3px;color:#777;font-weight:400;transform:scaleX(0.9238);transform-origin:0 50%;">25</div>
<svg style="position:absolute;left:172.5px;top:496px" width="5" height="4" viewBox="0 0 5 4"><path d="M0.5 0.8 L2.5 2.8 L4.5 0.8" fill="none" stroke="#888" stroke-width="0.6"/></svg>
<div class="t" style="left:182.3px;top:491.8px;font-size:7.3px;color:#333;font-weight:400;transform:scaleX(0.8347);transform-origin:0 50%;">Einträge pro Seite von insgesamt 13 Einträgen</div>
<div class="t" style="left:935px;top:492.1px;font-size:7.3px;color:#5f6267;font-weight:400;transform:scaleX(0.8705);transform-origin:0 50%;">Vorherige</div>
<div style="position:absolute;left:970px;top:488.7px;width:13.6px;height:16.3px;background:#0d4f91;border-radius:2px"></div>
<div class="t" style="left:971.8px;width:10px;text-align:center;top:491.6px;font-size:7px;color:#e8edf3;font-weight:400;transform:scaleX(0.8700);transform-origin:50% 50%;">1</div>
<div class="t" style="left:992px;top:492.1px;font-size:7.3px;color:#5f6267;font-weight:400;transform:scaleX(0.8328);transform-origin:0 50%;">Nächste</div>
</body></html>
